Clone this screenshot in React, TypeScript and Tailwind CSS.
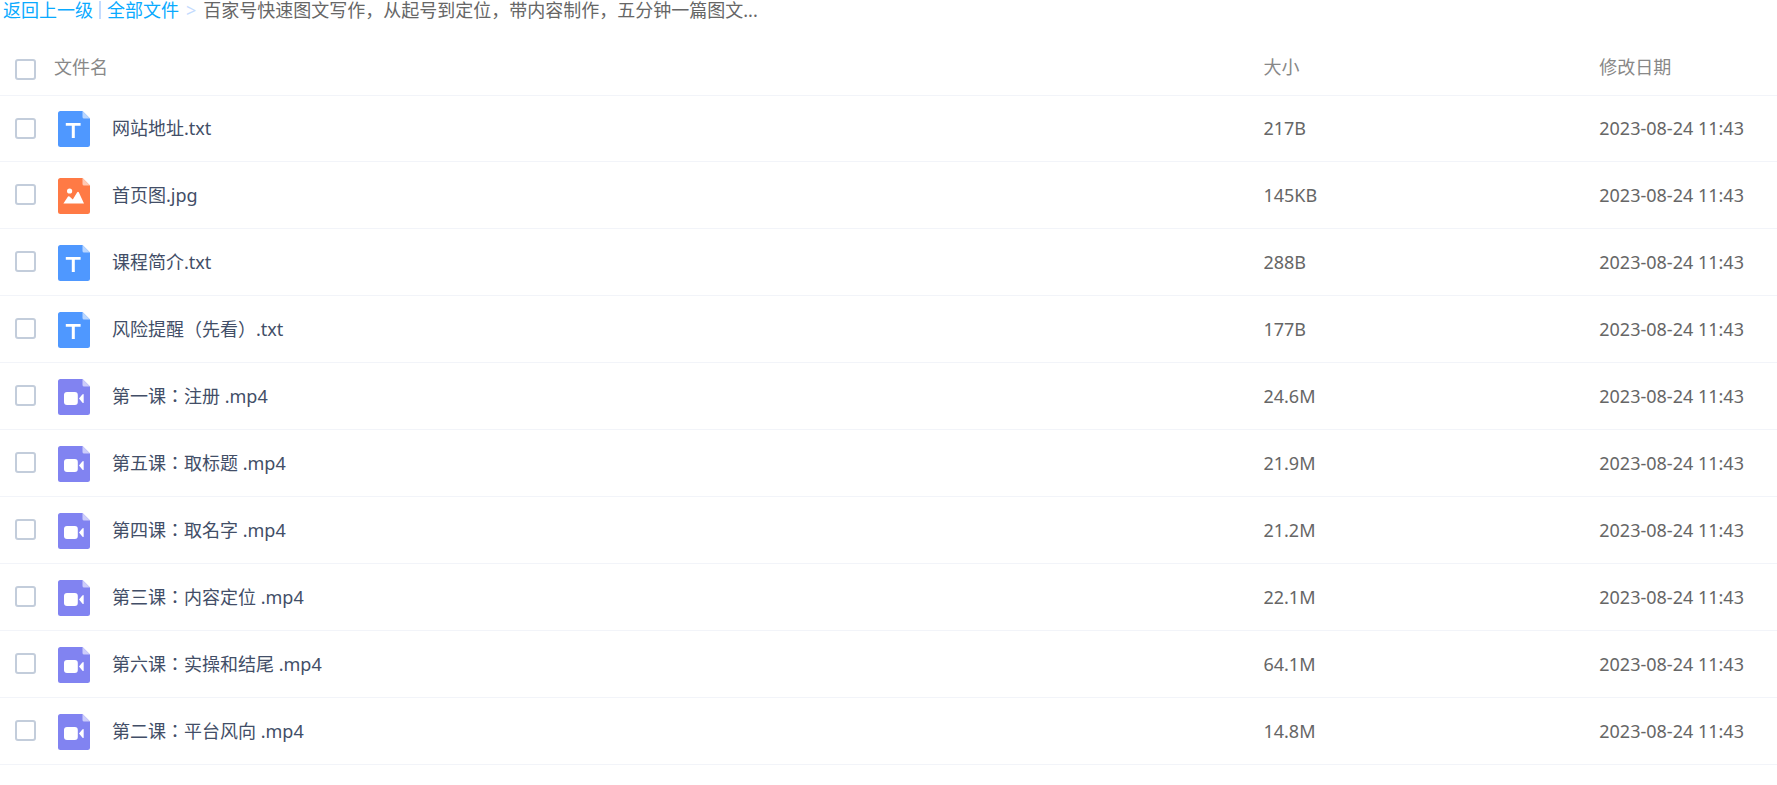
import React from "react";

type Kind = "text" | "image" | "video";

interface FileItem {
  name: string;
  kind: Kind;
  size: string;
  modified: string;
}

const files: FileItem[] = [
  { name: "网站地址.txt", kind: "text", size: "217B", modified: "2023-08-24 11:43" },
  { name: "首页图.jpg", kind: "image", size: "145KB", modified: "2023-08-24 11:43" },
  { name: "课程简介.txt", kind: "text", size: "288B", modified: "2023-08-24 11:43" },
  { name: "风险提醒（先看）.txt", kind: "text", size: "177B", modified: "2023-08-24 11:43" },
  { name: "第一课：注册 .mp4", kind: "video", size: "24.6M", modified: "2023-08-24 11:43" },
  { name: "第五课：取标题 .mp4", kind: "video", size: "21.9M", modified: "2023-08-24 11:43" },
  { name: "第四课：取名字 .mp4", kind: "video", size: "21.2M", modified: "2023-08-24 11:43" },
  { name: "第三课：内容定位 .mp4", kind: "video", size: "22.1M", modified: "2023-08-24 11:43" },
  { name: "第六课：实操和结尾 .mp4", kind: "video", size: "64.1M", modified: "2023-08-24 11:43" },
  { name: "第二课：平台风向 .mp4", kind: "video", size: "14.8M", modified: "2023-08-24 11:43" },
];

const sheetColor: Record<Kind, string> = {
  text: "#4f98ff",
  image: "#ff7a45",
  video: "#8183f1",
};

const foldColor: Record<Kind, string> = {
  text: "#b9d6ff",
  image: "#ffcab5",
  video: "#cdcdfa",
};

function FileIcon({ kind }: { kind: Kind }) {
  return (
    <svg className="mt-[2px] h-9 w-8 shrink-0" viewBox="0 0 32 36" aria-hidden="true">
      <path
        d="M2.5 0H24.5L32 7.5V33.5A2.5 2.5 0 0 1 29.5 36H2.5A2.5 2.5 0 0 1 0 33.5V2.5A2.5 2.5 0 0 1 2.5 0Z"
        fill={sheetColor[kind]}
      />
      <path d="M24.5 0L32 7.5H26A1.5 1.5 0 0 1 24.5 6Z" fill={foldColor[kind]} />
      {kind === "text" && <path d="M7.8 12H22.6V14.8H16.8V27H13.8V14.8H7.8Z" fill="#fff" />}
      {kind === "image" && (
        <>
          <circle cx="11.6" cy="13" r="2.6" fill="#fff" />
          <path
            d="M5.4 25.6L10 18.6Q10.7 17.8 11.5 18.6L14.8 21.6L19.2 14.2Q20 13.2 20.8 14.2L26 25.6Z"
            fill="#fff"
          />
        </>
      )}
      {kind === "video" && (
        <>
          <rect x="6" y="13" width="13.8" height="13" rx="3" fill="#fff" />
          <path d="M21 19.5L24.3 15.4Q25.7 14.2 25.7 15.8V23.2Q25.7 24.8 24.3 23.6Z" fill="#fff" />
        </>
      )}
    </svg>
  );
}

function Tick({ id }: { id: string }) {
  return (
    <input
      id={id}
      type="checkbox"
      className="size-[21px] shrink-0 appearance-none rounded-[3px] border-2 border-[#c3cddb] bg-white checked:bg-[#09aaff]"
    />
  );
}

export default function App() {
  return (
    <main className="bg-white pb-5 font-['Noto_Sans','Noto_Sans_CJK_SC',sans-serif] text-[18px] leading-6 text-[#666]">
      <nav aria-label="路径" className="flex h-5 items-center pl-[3px] whitespace-nowrap">
        <a href="#up" className="text-[#09aaff]">返回上一级</a>
        <span className="mx-[6px] h-[18px] w-[2px] bg-[#c4dbfe]" />
        <a href="#all" className="text-[#09aaff]">全部文件</a>
        <span className="mx-[7px] text-[18px] text-[#c4dbfe]">&gt;</span>
        <span>百家号快速图文写作，从起号到定位，带内容制作，五分钟一篇图文...</span>
      </nav>
      <table className="mt-6 w-full table-fixed border-collapse text-left">
        <thead>
          <tr className="h-[51px] border-b border-[#f2f4f9] text-[#888]">
            <th className="w-[71.1%] p-0 font-normal">
              <div className="flex items-center gap-[18px] pl-[15px]">
                <Tick id="select-all" />
                <label htmlFor="select-all" className="pb-1">文件名</label>
              </div>
            </th>
            <th className="w-[18.9%] p-0 pb-1 font-normal">大小</th>
            <th className="p-0 pb-1 font-normal">修改日期</th>
          </tr>
        </thead>
        <tbody>
          {files.map((file, i) => (
            <tr key={file.name} className="h-[67px] border-b border-[#f2f4f9] first:h-[66px]">
              <td className="p-0">
                <div className="flex items-center gap-[22px] pl-[15px]">
                  <Tick id={`file-${i}`} />
                  <FileIcon kind={file.kind} />
                  <label
                    htmlFor={`file-${i}`}
                    className="font-['Noto_Sans','Noto_Sans_CJK_TC',sans-serif] text-[#424e67]"
                  >
                    {file.name}
                  </label>
                </div>
              </td>
              <td className="p-0">{file.size}</td>
              <td className="p-0 whitespace-nowrap">{file.modified}</td>
            </tr>
          ))}
        </tbody>
      </table>
    </main>
  );
}
